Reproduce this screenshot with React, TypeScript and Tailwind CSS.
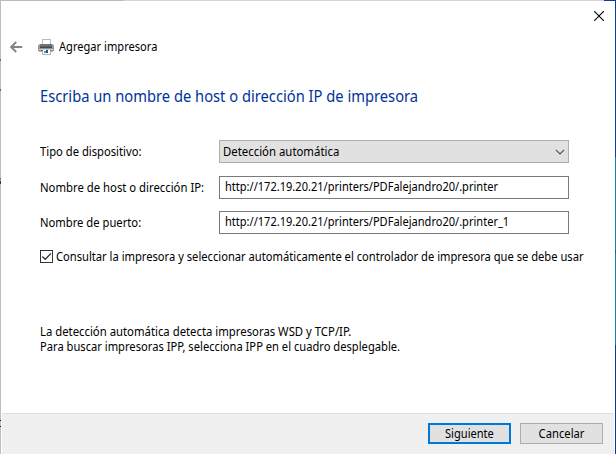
import { useState } from "react";

function BackArrow() {
  return (
    <svg width="13" height="12" viewBox="0 0 13 12" fill="none" stroke="#848484" strokeWidth="1.9">
      <path d="M1.2 6H12.2M6.2 1L1.2 6L6.2 11" />
    </svg>
  );
}

function PrinterIcon() {
  return (
    <svg width="16" height="16" viewBox="0 0 16 16" shapeRendering="crispEdges">
      <rect x="4" y="0" width="9" height="6" fill="#b9b9b9" />
      <rect x="5" y="1" width="7" height="5" fill="#fff" />
      <rect x="1" y="5" width="14" height="8" fill="#b0b0b0" />
      <rect x="0" y="6" width="16" height="6" fill="#9a9a9a" />
      <rect x="2" y="5" width="12" height="2" fill="#707378" />
      <rect x="2" y="7" width="12" height="1" fill="#5d6064" />
      <rect x="2" y="8" width="12" height="1" fill="#45484c" />
      <rect x="1" y="9" width="14" height="1" fill="#8f9193" />
      <rect x="1" y="10" width="14" height="1" fill="#d0d0d0" />
      <rect x="13" y="9" width="1" height="1" fill="#58c85d" />
      <rect x="3" y="11" width="10" height="1" fill="#666" />
      <rect x="4" y="12" width="9" height="4" fill="#b4b4b4" />
      <rect x="5" y="11" width="7" height="4" fill="#fff" />
      <rect x="6" y="12" width="2" height="2" fill="#21aad0" />
      <rect x="8" y="12" width="2" height="2" fill="#195ba8" />
      <rect x="8" y="11" width="2" height="1" fill="#274f82" />
    </svg>
  );
}

function CloseIcon() {
  return (
    <svg width="10" height="10" viewBox="0 0 10 10" fill="none" stroke="#000" strokeWidth="1.1">
      <path d="M0 0L10 10M10 0L0 10" />
    </svg>
  );
}

function WindowEdges() {
  return (
    <>
      <div className="absolute top-0 left-0 flex h-px w-full">
        <div className="w-[124px] bg-[#bcbcbc]" />
        <div className="w-[480px] bg-[#d5d5d5]" />
        <div className="grow bg-[#0b3d91]" />
      </div>
      <div className="absolute top-0 left-0 flex h-full w-px flex-col bg-[#bdbdbd]">
        <div className="mt-[59px] h-[2px] bg-[#6a6a6a]" />
        <div className="mt-[28px] h-[2px] bg-[#6a6a6a]" />
        <div className="mt-[87px] h-[2px] bg-[#777]" />
        <div className="mt-px h-[3px] bg-[#333]" />
        <div className="mt-[236px] h-px bg-[#222]" />
        <div className="mt-[5px] h-px bg-[#222]" />
      </div>
      <div className="absolute top-0 right-0 flex h-full w-px flex-col">
        <div className="h-[157px] bg-[#0b3d91]" />
        <div className="h-[93px] bg-[#1c7fa0]" />
        <div className="h-[3px] bg-[#155c8c]" />
        <div className="h-[92px] bg-[#1c7fa0]" />
        <div className="grow bg-[#0b3d80]" />
      </div>
    </>
  );
}

export default function App() {
  const [checked, setChecked] = useState(true);
  return (
    <div className="relative flex h-[454px] w-[616px] flex-col overflow-hidden bg-white font-['Noto_Sans',sans-serif] text-[12px] leading-4 whitespace-nowrap text-black">
      <WindowEdges />
      <div className="flex h-[32px] justify-end pt-[11px] pr-[12px]">
        <button aria-label="Cerrar" className="h-[10px]"><CloseIcon /></button>
      </div>
      <header className="flex h-[29px] items-center pl-[10px]">
        <BackArrow />
        <div className="ml-[15px]"><PrinterIcon /></div>
        <span className="ml-[5px] inline-block origin-left scale-x-[0.925]">Agregar impresora</span>
      </header>
      <main className="flex h-[352px] flex-col pl-[40px]">
        <h1 className="mt-[24px] h-[22px] text-[16px] leading-[22px] text-[#003399]"><span className="inline-block origin-left scale-x-[0.919]">Escriba un nombre de host o dirección IP de impresora</span></h1>
        <div className="mt-[33px] flex h-[23px] items-center">
          <div className="w-[179px]"><span className="inline-block origin-left scale-x-[0.935]">Tipo de dispositivo:</span></div>
          <div className="flex h-[23px] w-[350px] items-center justify-between border border-[#adadad] bg-[#e1e1e1] pr-[3px] pl-[3px]">
            <span className="inline-block origin-left scale-x-[0.948]">Detección automática</span>
            <svg width="10" height="6" viewBox="0 0 10 6" fill="none" stroke="#555" strokeWidth="1.2"><path d="M.8 .8L5 5L9.2 .8" /></svg>
          </div>
        </div>
        <div className="mt-[13px] flex h-[23px] items-center">
          <div className="w-[179px]"><span className="inline-block origin-left scale-x-[0.943]">Nombre de host o dirección IP:</span></div>
          <div className="flex h-[23px] w-[350px] items-center border border-[#7a7a7a] pb-[2px] pl-[5px]"><span className="inline-block origin-left scale-x-[0.921]">http://172.19.20.21/printers/PDFalejandro20/.printer</span></div>
        </div>
        <div className="mt-[12px] flex h-[23px] items-center">
          <div className="w-[179px]"><span className="inline-block origin-left scale-x-[0.935]">Nombre de puerto:</span></div>
          <div className="flex h-[23px] w-[350px] items-center border border-[#7a7a7a] pb-[2px] pl-[5px]"><span className="inline-block origin-left scale-x-[0.921]">http://172.19.20.21/printers/PDFalejandro20/.printer_1</span></div>
        </div>
        <div className="mt-[15px] flex h-[16px] items-start">
          <button role="checkbox" aria-checked={checked} onClick={() => setChecked(!checked)} className="mt-px flex h-[13px] w-[13px] shrink-0 items-center justify-center border border-[#333]">
            {checked && <svg width="11" height="11" viewBox="0 0 11 11" className="shrink-0" fill="none" stroke="#333" strokeWidth="1.3"><path d="M1.3 5.5L4.2 8.3L10 2.4" /></svg>}
          </button>
          <span className="ml-[3px] inline-block shrink-0 origin-left scale-x-[0.93]">Consultar la impresora y seleccionar automáticamente el controlador de impresora que se debe usar</span>
        </div>
        <div className="mt-[59px] flex flex-col leading-[15px]">
          <p className="h-[15px]"><span className="inline-block origin-left scale-x-[0.944]">La detección automática detecta impresoras WSD y TCP/IP.</span></p>
          <p className="h-[15px]"><span className="inline-block origin-left scale-x-[0.93]">Para buscar impresoras IPP, selecciona IPP en el cuadro desplegable.</span></p>
        </div>
      </main>
      <footer className="mr-[2px] ml-[2px] flex h-[41px] justify-end gap-[9px] border-t border-[#dfdfdf] bg-[#f0f0f0] pt-[9px] pr-[11px]">
        <button className="flex h-[21px] w-[83px] items-center justify-center border-2 border-[#0078d7] bg-[#e1e1e1]"><span className="inline-block scale-x-[0.925]">Siguiente</span></button>
        <button className="flex h-[21px] w-[83px] items-center justify-center border border-[#adadad] bg-[#e1e1e1]"><span className="inline-block scale-x-[0.935]">Cancelar</span></button>
      </footer>
    </div>
  );
}
